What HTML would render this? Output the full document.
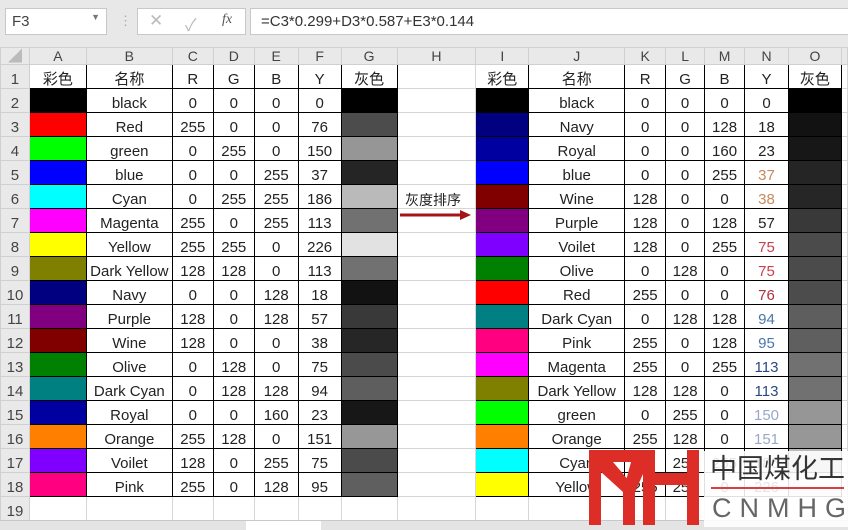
<!DOCTYPE html>
<html><head><meta charset="utf-8"><style>
*{margin:0;padding:0;box-sizing:border-box}
body{width:848px;height:530px;overflow:hidden;background:#e8e8e8;font-family:"Liberation Sans","Noto Sans CJK SC",sans-serif;position:relative}
.box{position:absolute;background:#fff;border:1px solid #c8c8c8}
table{position:absolute;left:0;top:47px;border-collapse:collapse;table-layout:fixed;background:#fff}
td{border:1px solid #d6d6d6;height:24px;font-size:15px;color:#222;text-align:center;padding-top:7px;line-height:16px;white-space:nowrap;overflow:hidden}
tr.h td{height:17px;background:#e9e9e9;color:#444;font-size:14px;padding-top:0;line-height:16px;border-color:#d0d0d0}
td.r{background:#e9e9e9;color:#444;font-size:15px;text-align:center;border-color:#d0d0d0}
td.b{border:1px solid #000}
</style></head><body>
<div class="box" style="left:5px;top:8px;width:102px;height:27px;font-size:15px;color:#444;padding:4px 6px">F3<span style="position:absolute;right:6px;top:3px;font-size:9px;color:#777">▼</span></div>
<div style="position:absolute;left:119px;top:13px;color:#aaa;font-size:13px">⋮</div>
<div class="box" style="left:137px;top:8px;width:109px;height:27px;color:#bbb;font-size:17px">
<span style="position:absolute;left:11px;top:2px">✕</span><span style="position:absolute;left:47px;top:2px">✓</span><span style="position:absolute;left:84px;top:3px;color:#555;font-style:italic;font-family:'Liberation Serif',serif;font-size:14px">fx</span></div>
<div class="box" style="left:250px;top:8px;width:600px;height:27px;font-size:15px;color:#333;padding:4px 10px">=C3*0.299+D3*0.587+E3*0.144</div>
<table>
<colgroup><col style="width:29px"><col style="width:57px"><col style="width:86px"><col style="width:41px"><col style="width:41px"><col style="width:44px"><col style="width:43px"><col style="width:56px"><col style="width:79px"><col style="width:53px"><col style="width:96px"><col style="width:41px"><col style="width:39px"><col style="width:40px"><col style="width:44px"><col style="width:53px"><col style="width:6px"></colgroup>
<tr class="h"><td style="color:#bbb">◢</td><td>A</td><td>B</td><td>C</td><td>D</td><td>E</td><td>F</td><td>G</td><td>H</td><td>I</td><td>J</td><td>K</td><td>L</td><td>M</td><td>N</td><td>O</td><td></td></tr>
<tr><td class="r">1</td><td class="b">彩色</td><td class="b">名称</td><td class="b">R</td><td class="b">G</td><td class="b">B</td><td class="b">Y</td><td class="b">灰色</td><td></td><td class="b">彩色</td><td class="b">名称</td><td class="b">R</td><td class="b">G</td><td class="b">B</td><td class="b">Y</td><td class="b">灰色</td><td></td></tr>
<tr><td class="r">2</td><td class="b" style="background:#000"></td><td class="b">black</td><td class="b">0</td><td class="b">0</td><td class="b">0</td><td class="b">0</td><td class="b" style="background:rgb(0,0,0)"></td><td></td><td class="b" style="background:#000"></td><td class="b">black</td><td class="b">0</td><td class="b">0</td><td class="b">0</td><td class="b">0</td><td class="b" style="background:rgb(0,0,0)"></td><td></td></tr>
<tr><td class="r">3</td><td class="b" style="background:#f00"></td><td class="b">Red</td><td class="b">255</td><td class="b">0</td><td class="b">0</td><td class="b">76</td><td class="b" style="background:rgb(76,76,76)"></td><td></td><td class="b" style="background:#000080"></td><td class="b">Navy</td><td class="b">0</td><td class="b">0</td><td class="b">128</td><td class="b">18</td><td class="b" style="background:rgb(18,18,18)"></td><td></td></tr>
<tr><td class="r">4</td><td class="b" style="background:#0f0"></td><td class="b">green</td><td class="b">0</td><td class="b">255</td><td class="b">0</td><td class="b">150</td><td class="b" style="background:rgb(150,150,150)"></td><td></td><td class="b" style="background:#0000a0"></td><td class="b">Royal</td><td class="b">0</td><td class="b">0</td><td class="b">160</td><td class="b">23</td><td class="b" style="background:rgb(23,23,23)"></td><td></td></tr>
<tr><td class="r">5</td><td class="b" style="background:#00f"></td><td class="b">blue</td><td class="b">0</td><td class="b">0</td><td class="b">255</td><td class="b">37</td><td class="b" style="background:rgb(37,37,37)"></td><td></td><td class="b" style="background:#00f"></td><td class="b">blue</td><td class="b">0</td><td class="b">0</td><td class="b">255</td><td class="b" style="color:#c8895a">37</td><td class="b" style="background:rgb(37,37,37)"></td><td></td></tr>
<tr><td class="r">6</td><td class="b" style="background:#0ff"></td><td class="b">Cyan</td><td class="b">0</td><td class="b">255</td><td class="b">255</td><td class="b">186</td><td class="b" style="background:rgb(186,186,186)"></td><td></td><td class="b" style="background:#800000"></td><td class="b">Wine</td><td class="b">128</td><td class="b">0</td><td class="b">0</td><td class="b" style="color:#c8895a">38</td><td class="b" style="background:rgb(38,38,38)"></td><td></td></tr>
<tr><td class="r">7</td><td class="b" style="background:#f0f"></td><td class="b">Magenta</td><td class="b">255</td><td class="b">0</td><td class="b">255</td><td class="b">113</td><td class="b" style="background:rgb(113,113,113)"></td><td></td><td class="b" style="background:#800080"></td><td class="b">Purple</td><td class="b">128</td><td class="b">0</td><td class="b">128</td><td class="b">57</td><td class="b" style="background:rgb(57,57,57)"></td><td></td></tr>
<tr><td class="r">8</td><td class="b" style="background:#ff0"></td><td class="b">Yellow</td><td class="b">255</td><td class="b">255</td><td class="b">0</td><td class="b">226</td><td class="b" style="background:rgb(226,226,226)"></td><td></td><td class="b" style="background:#8000ff"></td><td class="b">Voilet</td><td class="b">128</td><td class="b">0</td><td class="b">255</td><td class="b" style="color:#c9404f">75</td><td class="b" style="background:rgb(75,75,75)"></td><td></td></tr>
<tr><td class="r">9</td><td class="b" style="background:#808000"></td><td class="b">Dark Yellow</td><td class="b">128</td><td class="b">128</td><td class="b">0</td><td class="b">113</td><td class="b" style="background:rgb(113,113,113)"></td><td></td><td class="b" style="background:#008000"></td><td class="b">Olive</td><td class="b">0</td><td class="b">128</td><td class="b">0</td><td class="b" style="color:#c9404f">75</td><td class="b" style="background:rgb(75,75,75)"></td><td></td></tr>
<tr><td class="r">10</td><td class="b" style="background:#000080"></td><td class="b">Navy</td><td class="b">0</td><td class="b">0</td><td class="b">128</td><td class="b">18</td><td class="b" style="background:rgb(18,18,18)"></td><td></td><td class="b" style="background:#f00"></td><td class="b">Red</td><td class="b">255</td><td class="b">0</td><td class="b">0</td><td class="b" style="color:#b03040">76</td><td class="b" style="background:rgb(76,76,76)"></td><td></td></tr>
<tr><td class="r">11</td><td class="b" style="background:#800080"></td><td class="b">Purple</td><td class="b">128</td><td class="b">0</td><td class="b">128</td><td class="b">57</td><td class="b" style="background:rgb(57,57,57)"></td><td></td><td class="b" style="background:#008080"></td><td class="b">Dark Cyan</td><td class="b">0</td><td class="b">128</td><td class="b">128</td><td class="b" style="color:#4a78a8">94</td><td class="b" style="background:rgb(94,94,94)"></td><td></td></tr>
<tr><td class="r">12</td><td class="b" style="background:#800000"></td><td class="b">Wine</td><td class="b">128</td><td class="b">0</td><td class="b">0</td><td class="b">38</td><td class="b" style="background:rgb(38,38,38)"></td><td></td><td class="b" style="background:#ff0080"></td><td class="b">Pink</td><td class="b">255</td><td class="b">0</td><td class="b">128</td><td class="b" style="color:#4a78a8">95</td><td class="b" style="background:rgb(95,95,95)"></td><td></td></tr>
<tr><td class="r">13</td><td class="b" style="background:#008000"></td><td class="b">Olive</td><td class="b">0</td><td class="b">128</td><td class="b">0</td><td class="b">75</td><td class="b" style="background:rgb(75,75,75)"></td><td></td><td class="b" style="background:#f0f"></td><td class="b">Magenta</td><td class="b">255</td><td class="b">0</td><td class="b">255</td><td class="b" style="color:#2a4a80">113</td><td class="b" style="background:rgb(113,113,113)"></td><td></td></tr>
<tr><td class="r">14</td><td class="b" style="background:#008080"></td><td class="b">Dark Cyan</td><td class="b">0</td><td class="b">128</td><td class="b">128</td><td class="b">94</td><td class="b" style="background:rgb(94,94,94)"></td><td></td><td class="b" style="background:#808000"></td><td class="b">Dark Yellow</td><td class="b">128</td><td class="b">128</td><td class="b">0</td><td class="b" style="color:#2a4a80">113</td><td class="b" style="background:rgb(113,113,113)"></td><td></td></tr>
<tr><td class="r">15</td><td class="b" style="background:#0000a0"></td><td class="b">Royal</td><td class="b">0</td><td class="b">0</td><td class="b">160</td><td class="b">23</td><td class="b" style="background:rgb(23,23,23)"></td><td></td><td class="b" style="background:#0f0"></td><td class="b">green</td><td class="b">0</td><td class="b">255</td><td class="b">0</td><td class="b" style="color:#98a8c8">150</td><td class="b" style="background:rgb(150,150,150)"></td><td></td></tr>
<tr><td class="r">16</td><td class="b" style="background:#ff8000"></td><td class="b">Orange</td><td class="b">255</td><td class="b">128</td><td class="b">0</td><td class="b">151</td><td class="b" style="background:rgb(151,151,151)"></td><td></td><td class="b" style="background:#ff8000"></td><td class="b">Orange</td><td class="b">255</td><td class="b">128</td><td class="b">0</td><td class="b" style="color:#98a8c8">151</td><td class="b" style="background:rgb(151,151,151)"></td><td></td></tr>
<tr><td class="r">17</td><td class="b" style="background:#8000ff"></td><td class="b">Voilet</td><td class="b">128</td><td class="b">0</td><td class="b">255</td><td class="b">75</td><td class="b" style="background:rgb(75,75,75)"></td><td></td><td class="b" style="background:#0ff"></td><td class="b">Cyan</td><td class="b">0</td><td class="b">255</td><td class="b">255</td><td class="b">186</td><td class="b" style="background:rgb(186,186,186)"></td><td></td></tr>
<tr><td class="r">18</td><td class="b" style="background:#ff0080"></td><td class="b">Pink</td><td class="b">255</td><td class="b">0</td><td class="b">128</td><td class="b">95</td><td class="b" style="background:rgb(95,95,95)"></td><td></td><td class="b" style="background:#ff0"></td><td class="b">Yellow</td><td class="b">255</td><td class="b">255</td><td class="b">0</td><td class="b">226</td><td class="b" style="background:rgb(226,226,226)"></td><td></td></tr>
<tr><td class="r">19</td><td></td><td></td><td></td><td></td><td></td><td></td><td></td><td></td><td></td><td></td><td></td><td></td><td></td><td></td><td></td><td></td></tr>
</table>
<div style="position:absolute;left:0;top:520px;width:848px;height:10px;background:#e4e4e4;border-top:1px solid #c8c8c8"></div>
<div style="position:absolute;left:246px;top:521px;width:75px;height:9px;background:#fff"></div>
<div style="position:absolute;left:405px;top:190px;font-size:14px;color:#222">灰度排序</div>
<svg style="position:absolute;left:398px;top:208px" width="76" height="14"><line x1="2" y1="7" x2="64" y2="7" stroke="#a51515" stroke-width="3"/><polygon points="62,2 73,7 62,12" fill="#a51515"/></svg>
<div style="position:absolute;left:704px;top:451px;width:144px;height:76px;background:rgba(255,255,255,0.88)"></div>
<svg style="position:absolute;left:585px;top:448px" width="120" height="80">
<g fill="#dc2e26">
<rect x="4" y="2" width="12" height="75"/>
<rect x="4" y="2" width="66" height="12"/>
<polygon points="16,14 28,14 50,40 50,50 38,50 38,44 16,24"/>
<polygon points="58,14 58,26 50,44 38,44 46,14"/>
<rect x="38" y="44" width="12" height="33"/>
<rect x="58" y="2" width="12" height="75"/>
<rect x="70" y="25" width="32" height="12"/>
<rect x="102" y="2" width="12" height="75"/>
</g></svg>
<div style="position:absolute;left:710px;top:453px;font-size:27px;color:#333;line-height:32px;white-space:nowrap">中国煤化工</div>
<div style="position:absolute;left:711px;top:487px;width:133px;height:2px;background:#d84040"></div>
<div style="position:absolute;left:712px;top:492px;font-size:27px;color:#666;letter-spacing:8px;line-height:32px;white-space:nowrap">CNMHG</div>
</body></html>
